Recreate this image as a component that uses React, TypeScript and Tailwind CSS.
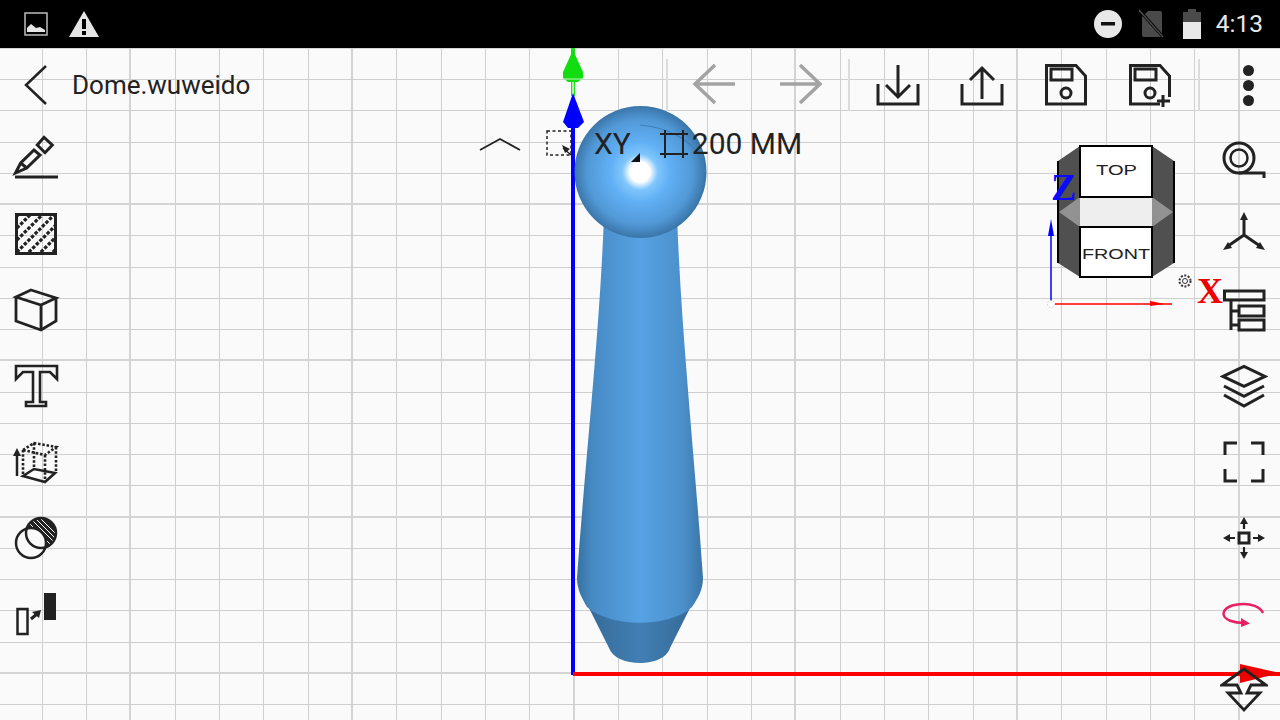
import React from 'react';

const INK = '#222222';

function Ico({ children, size = 48 }: { children: React.ReactNode; size?: number }) {
  return (
    <svg width={size} height={size} viewBox={`0 0 ${size} ${size}`} fill="none" stroke={INK} strokeWidth={2.5} className="shrink-0">
      {children}
    </svg>
  );
}

function StatusBar() {
  return (
    <div className="flex h-12 shrink-0 items-center bg-black pl-6 pr-[17px]">
      <svg width="24" height="24" viewBox="0 0 24 24" className="shrink-0">
        <rect x="1" y="1" width="22" height="22" fill="none" stroke="#bdbdbd" strokeWidth="1.5" />
        <path d="M3 20v-4l4-4 5 4 4-1 5 3v2z" fill="#e6e6e6" />
      </svg>
      <svg width="30" height="28" viewBox="0 0 30 28" className="ml-[21px] shrink-0">
        <path d="M15 1 30 27H0z" fill="#e6e6e6" />
        <path d="M13 9h4v10h-4zM13 21h4v4h-4z" fill="#000" />
      </svg>
      <svg width="28" height="28" viewBox="0 0 28 28" className="ml-auto shrink-0">
        <circle cx="14" cy="14" r="14" fill="#e8e8e8" />
        <rect x="7" y="12" width="14" height="3.5" fill="#111" />
      </svg>
      <svg width="26" height="30" viewBox="0 0 26 30" className="ml-[17px] shrink-0">
        <path d="M9 2h12a2 2 0 0 1 2 2v22a2 2 0 0 1-2 2H5a2 2 0 0 1-2-2V8z" fill="#4a4a4a" />
        <path d="M1 2 25 29" stroke="#000" strokeWidth="3" />
        <path d="M0 1 24 28" stroke="#4a4a4a" strokeWidth="1.5" />
      </svg>
      <svg width="20" height="30" viewBox="0 0 20 30" className="ml-[17px] shrink-0">
        <path d="M6 0h8v3h5v10H1V3h5z" fill="#4a4a4a" />
        <rect x="1" y="13" width="18" height="17" fill="#e8e8e8" />
      </svg>
      <span className="ml-[14px] font-['Roboto',sans-serif] text-[24.5px] leading-none text-[#e8e8e8]">4:13</span>
    </div>
  );
}

function Scene() {
  const xs: { p: number; major: boolean }[] = [];
  const ys: { p: number; major: boolean }[] = [];
  for (let i = -2; i < 27; i++) xs.push({ p: Math.round(130.3 + 44.34 * i), major: i % 5 === 0 });
  for (let i = -5; i < 20; i++) ys.push({ p: Math.round(204.2 + 31.24 * i), major: i % 5 === 0 });
  return (
    <svg width="1280" height="672" viewBox="0 48 1280 672" className="absolute inset-0">
      <defs>
        <radialGradient id="ball" gradientUnits="userSpaceOnUse" cx="640" cy="172" r="66">
          <stop offset="0" stopColor="#ffffff" />
          <stop offset="0.15" stopColor="#ffffff" />
          <stop offset="0.27" stopColor="#7fc6fb" />
          <stop offset="0.45" stopColor="#62b0f5" />
          <stop offset="0.8" stopColor="#5198d6" />
          <stop offset="1" stopColor="#3a75a8" />
        </radialGradient>
        <linearGradient id="body" x1="0" y1="0" x2="1" y2="0">
          <stop offset="0" stopColor="#37719f" />
          <stop offset="0.12" stopColor="#468ac4" />
          <stop offset="0.5" stopColor="#57a2e4" />
          <stop offset="0.85" stopColor="#4a8fca" />
          <stop offset="1" stopColor="#3a75a6" />
        </linearGradient>
        <linearGradient id="cone" x1="0" y1="0" x2="1" y2="0">
          <stop offset="0" stopColor="#356a98" />
          <stop offset="0.5" stopColor="#427fb4" />
          <stop offset="1" stopColor="#356a98" />
        </linearGradient>
      </defs>

      <rect x="0" y="48" width="1280" height="672" fill="#fafafa" />
      {xs.map(({ p, major }) => (
        <line key={p} x1={major ? p : p + 0.5} x2={major ? p : p + 0.5} y1="48" y2="720" stroke={major ? '#d4d4d4' : '#cfcfcf'} strokeWidth={major ? 2 : 1} />
      ))}
      {ys.map(({ p, major }) => (
        <line key={p} y1={major ? p : p + 0.5} y2={major ? p : p + 0.5} x1="0" x2="1280" stroke={major ? '#d4d4d4' : '#cfcfcf'} strokeWidth={major ? 2 : 1} />
      ))}

      <path d="M573 48V96" stroke="#22dd22" strokeWidth="4" />
      <path d="M573 76V96" stroke="#d8f8d0" strokeWidth="1.5" />
      <path d="M573 50 583 72V78L578 82H568L563 78V72z" fill="#11dd11" />
      <path d="M564 79 582 79" stroke="#c8f5c0" strokeWidth="1" />
      <path d="M573 93 584 122 578 128H568L563 122z" fill="#0000ff" />
      <rect x="571" y="125" width="4" height="550" fill="#0000ff" />
      <rect x="573" y="672" width="707" height="4" fill="#ff0000" />

      <path d="M587 604C600 617 680 617 692 604L670 648C664 668 616 668 609 648z" fill="url(#cone)" />
      <path d="M604 215H677C681 330 694 450 703 578C703 590 698 598 692 607C670 628 610 628 587 607C582 598 577 590 577 578C586 450 600 330 604 215z" fill="url(#body)" />
      <circle cx="640.5" cy="172" r="66" fill="url(#ball)" />
      <path d="M640 125C675 128 700 145 705 172" fill="none" stroke="#3f7fb5" strokeWidth="1.2" />
      <path d="M1240 664 1280 673 1240 683z" fill="#ee0000" />

      <path d="M1080 146 1058 161V263L1080 277zM1152 146 1174 161V263L1152 277z" fill="#505050" />
      <path d="M1058 161V263M1174 161V263" stroke="#000" strokeWidth="2" />
      <rect x="1080" y="197" width="72" height="30" fill="#eeeeee" />
      <path d="M1059 212 1080 197V227zM1173 212 1152 197V227z" fill="#929292" />
      <rect x="1080" y="146" width="72" height="51" fill="#fff" stroke="#000" strokeWidth="2" />
      <rect x="1080" y="227" width="72" height="50" fill="#fff" stroke="#000" strokeWidth="2" />
      <text x="1096" y="175" fontFamily="Liberation Sans, sans-serif" fontSize="15" fill="#222" textLength="41" lengthAdjust="spacingAndGlyphs">TOP</text>
      <text x="1082" y="259" fontFamily="Liberation Sans, sans-serif" fontSize="15" fill="#222" textLength="68" lengthAdjust="spacingAndGlyphs">FRONT</text>
      <text x="1051" y="200" fontFamily="Liberation Serif, serif" fontWeight="700" fontSize="38" fill="#0a0aff">Z</text>
      <text x="1197" y="303" fontFamily="Liberation Serif, serif" fontWeight="700" fontSize="36" fill="#ee0000">X</text>

      <path d="M1051 235V303" stroke="#0000ff" strokeWidth="1.5" />
      <path d="M1051 219 1054 236H1048z" fill="#0000ff" />
      <path d="M1055 304H1172" stroke="#ff0000" strokeWidth="1.5" />
      <path d="M1150 301 1165 304 1150 306z" fill="#ff0000" />
      <circle cx="1051" cy="304" r="3.5" fill="#fff" stroke="#ccc" strokeWidth="1" strokeDasharray="1.5 1.5" />
      <circle cx="1185" cy="281" r="2.5" fill="none" stroke="#333" strokeWidth="1" />
      <circle cx="1185" cy="281" r="5.5" fill="none" stroke="#333" strokeWidth="2" strokeDasharray="2 1.5" />
    </svg>
  );
}

function Back() {
  return (
    <svg width="26" height="42" viewBox="0 0 26 42" fill="none" stroke={INK} strokeWidth="2.5" className="shrink-0">
      <path d="M23 2 3 21 23 40" />
    </svg>
  );
}

function Arrow({ dir }: { dir: 'l' | 'r' }) {
  return (
    <Ico>
      <g stroke="#a3a3a3" strokeWidth="3.5">
        {dir === 'l' ? <path d="M46 23H7M26 4 6 23 26 42" /> : <path d="M3 23H42M23 4 43 23 23 42" />}
      </g>
    </Ico>
  );
}

const Sep = () => <div className="h-[52px] w-0.5 shrink-0 bg-[#dcdcdc]" />;

const headerIcons = [
  <Ico key="dl"><path d="M4 23V43H44V23M24 4V36M12 24 24 36 36 24" strokeWidth="3" /></Ico>,
  <Ico key="ul"><path d="M4 23V43H44V23M24 38V7M12 19 24 7 36 19" strokeWidth="3" /></Ico>,
  <Ico key="save">
    <path d="M4.5 4.5H34L43.5 15V43H4.5z" strokeWidth="3" />
    <rect x="9" y="8" width="21" height="11" strokeWidth="3" />
    <circle cx="24" cy="32" r="5" strokeWidth="3" />
  </Ico>,
  <Ico key="saveplus">
    <path d="M34 43H4.5V4.5H34L43.5 15V36" strokeWidth="3" />
    <rect x="9" y="8" width="21" height="11" strokeWidth="3" />
    <circle cx="24" cy="32" r="5" strokeWidth="3" />
    <path d="M37 34V46M31 40H44" strokeWidth="3" />
  </Ico>,
];

function Header() {
  return (
    <header className="flex h-[74px] shrink-0 items-center">
      <div className="ml-[23px]"><Back /></div>
      <span className="ml-[23px] font-['Roboto',sans-serif] text-[26px] leading-none text-[#222]">Dome.wuweido</span>
      <div className="ml-auto flex items-center">
        <Sep />
        <div className="ml-[21px] flex gap-10">
          <Arrow dir="l" />
          <Arrow dir="r" />
        </div>
        <div className="ml-[23px]"><Sep /></div>
        <div className="ml-[24px] flex gap-9">{headerIcons}</div>
        <div className="ml-[24px]"><Sep /></div>
        <div className="ml-[24px] mr-2 flex w-[48px] flex-col items-center gap-1">
          <span className="size-[11px] rounded-full bg-[#222]" />
          <span className="size-[11px] rounded-full bg-[#222]" />
          <span className="size-[11px] rounded-full bg-[#222]" />
        </div>
      </div>
    </header>
  );
}

const leftTools = [
  <Ico key="pencil">
    <path d="M3 44H46" strokeWidth="3.2" />
    <path d="M3.5 40 8.7 30 22 17 28 22 14.7 35zM8.7 30 14.7 35" strokeWidth="3" />
    <path d="M32 4.3 40.3 12 33 19.7 25.3 12z" strokeWidth="3" />
  </Ico>,
  <Ico key="hatch">
    <clipPath id="hb"><rect x="5" y="6" width="38" height="38" /></clipPath>
    <g clipPath="url(#hb)" strokeWidth="3.2" strokeDasharray="3.5 1.6">
      <path d="M-6 18 18 -6M-6 30 30 -6M-6 42 42 -6M-6 54 54 -6M6 54 56 4M18 54 56 16M30 54 56 28M42 54 56 40" />
    </g>
    <rect x="4.5" y="5.5" width="39" height="39" strokeWidth="3" />
  </Ico>,
  <Ico key="cube"><path d="M19 5 44 13 29 20 4 12zM4 12V36L29 45 44 36V13M29 20V45" strokeWidth="2.8" /></Ico>,
  <Ico key="text">
    <path d="M4 4H45V17L38 10H28V40H34V44H14V40H21V10H11L4 17z" strokeWidth="2.6" />
  </Ico>,
  <Ico key="extrude">
    <path d="M5 38V14" strokeWidth="2.5" />
    <path d="M1 18 5 10 9 18z" fill={INK} stroke="none" />
    <path d="M11 38 22 31 43 35 33 44z" strokeWidth="2.6" />
    <path d="M11 12 22 5 44 9 33 17zM11 12V38M33 17V44M44 9V35M22 5V31" strokeWidth="2.6" strokeDasharray="2.5 1.8" />
  </Ico>,
  <Ico key="bool">
    <clipPath id="bb"><circle cx="29" cy="19" r="15" /></clipPath>
    <circle cx="29" cy="19" r="15" fill={INK} stroke="none" />
    <g clipPath="url(#bb)" stroke="#fafafa" strokeWidth="1">
      <path d="M18 4 46 32M14 6 42 34M22 3 48 29M26 2 50 26" />
    </g>
    <circle cx="19" cy="29" r="15" fill="#fafafa" />
    <circle cx="29" cy="19" r="15" />
  </Ico>,
  <Ico key="moveto">
    <rect x="5.5" y="19" width="10" height="25" />
    <rect x="32" y="3" width="12" height="27" fill={INK} stroke="none" />
    <path d="M19 29 25 24" strokeWidth="3" />
    <path d="M29 20 20 22 27 28z" fill={INK} stroke="none" />
  </Ico>,
];

const rightTools = [
  <Ico key="tape">
    <circle cx="19" cy="25" r="15" strokeWidth="3" />
    <circle cx="19" cy="25" r="8.5" strokeWidth="2.5" />
    <path d="M19 40H44V45" strokeWidth="3" />
  </Ico>,
  <Ico key="axes">
    <path d="M24 26V8M24 26 8 37M24 26 40 37" strokeWidth="3" />
    <path d="M24 3 28 11H20zM3 41 12 39 8 33zM45 41 36 39 40 33z" fill={INK} stroke="none" />
  </Ico>,
  <Ico key="tree">
    <rect x="4.5" y="6" width="39.5" height="9" strokeWidth="3" />
    <rect x="19" y="21" width="25" height="10" strokeWidth="3" />
    <rect x="19" y="35" width="25" height="10" strokeWidth="3" />
    <path d="M11 15V45M11 26H19M11 40H19" strokeWidth="3" />
  </Ico>,
  <Ico key="layers">
    <path d="M3 14.4 24 4.4 45 14.4 24 24.4z" strokeWidth="3" />
    <path d="M4 24 24 34.4 44 24M4 33 24 44 44 33" strokeWidth="3" />
  </Ico>,
  <Ico key="frame"><path d="M5 17V5H17M31 5H43V17M5 31V43H17M43 31V43H31" strokeWidth="3" /></Ico>,
  <Ico key="move">
    <rect x="19" y="19" width="10" height="10" strokeWidth="3" />
    <path d="M24 15V8M24 33V40M15 24H8M33 24H40" strokeWidth="2.2" />
    <path d="M24 3 28 10H20zM24 45 20 38H28zM3 24 10 20V28zM45 24 38 28V20z" fill={INK} stroke="none" />
  </Ico>,
  <Ico key="rotate">
    <path d="M43 23C40 16 30 14 24 14 12 14 3.5 18 3.5 24 4 30 14 33 24 33" stroke="#e91e63" />
    <path d="M21 28 30 33.5 21 37z" fill="#e91e63" stroke="none" />
  </Ico>,
  <Ico key="flip">
    <path d="M24 3 2 19H17L21 27H8L24 44 40 27H27L31 19H46z" strokeWidth="2.8" />
  </Ico>,
];

function ViewBar() {
  return (
    <div className="ml-[407px] mt-[4px] flex h-9 items-center">
      <svg width="42" height="14" viewBox="0 0 42 14" fill="none" stroke={INK} strokeWidth="1.8" className="shrink-0">
        <path d="M1 13 21 2 41 13" />
      </svg>
      <svg width="30" height="32" viewBox="0 0 30 32" fill="none" stroke={INK} className="ml-[25px] shrink-0">
        <rect x="1" y="3" width="24" height="24" strokeWidth="1.5" strokeDasharray="3 2.5" />
        <path d="M17 20 25 27" strokeWidth="1.5" />
        <path d="M16 17 24 21 19 25z" fill={INK} stroke="none" />
      </svg>
      <div className="relative ml-[18px] font-['Roboto',sans-serif] text-[30px] leading-none text-[#222]">
        XY
        <span className="absolute left-[37px] top-[24px] size-0 border-b-[9px] border-l-[9px] border-b-[#111] border-l-transparent" />
      </div>
      <svg width="30" height="32" viewBox="0 0 30 32" fill="none" stroke={INK} strokeWidth="2" className="ml-[28px] shrink-0">
        <path d="M6 2V30M24 2V30M1 6H29M1 26H29" />
      </svg>
      <span className="ml-[3px] font-['Roboto',sans-serif] text-[30px] leading-none text-[#222]">200 MM</span>
    </div>
  );
}

function Column({ items }: { items: React.ReactNode[] }) {
  return (
    <div className="flex w-[72px] shrink-0 flex-col items-center gap-[6.2px]">
      {items.map((item, i) => (
        <div key={i} className="flex h-[70px] w-full items-center justify-center">{item}</div>
      ))}
    </div>
  );
}

export default function App() {
  return (
    <div className="flex h-[720px] w-[1280px] flex-col overflow-hidden bg-[#fafafa]">
      <StatusBar />
      <main className="relative flex-1">
        <Scene />
        <div className="relative flex h-full flex-col">
          <Header />
          <div className="flex flex-1 justify-between">
            <Column items={leftTools} />
            <div className="flex-1"><ViewBar /></div>
            <Column items={rightTools} />
          </div>
        </div>
      </main>
    </div>
  );
}
